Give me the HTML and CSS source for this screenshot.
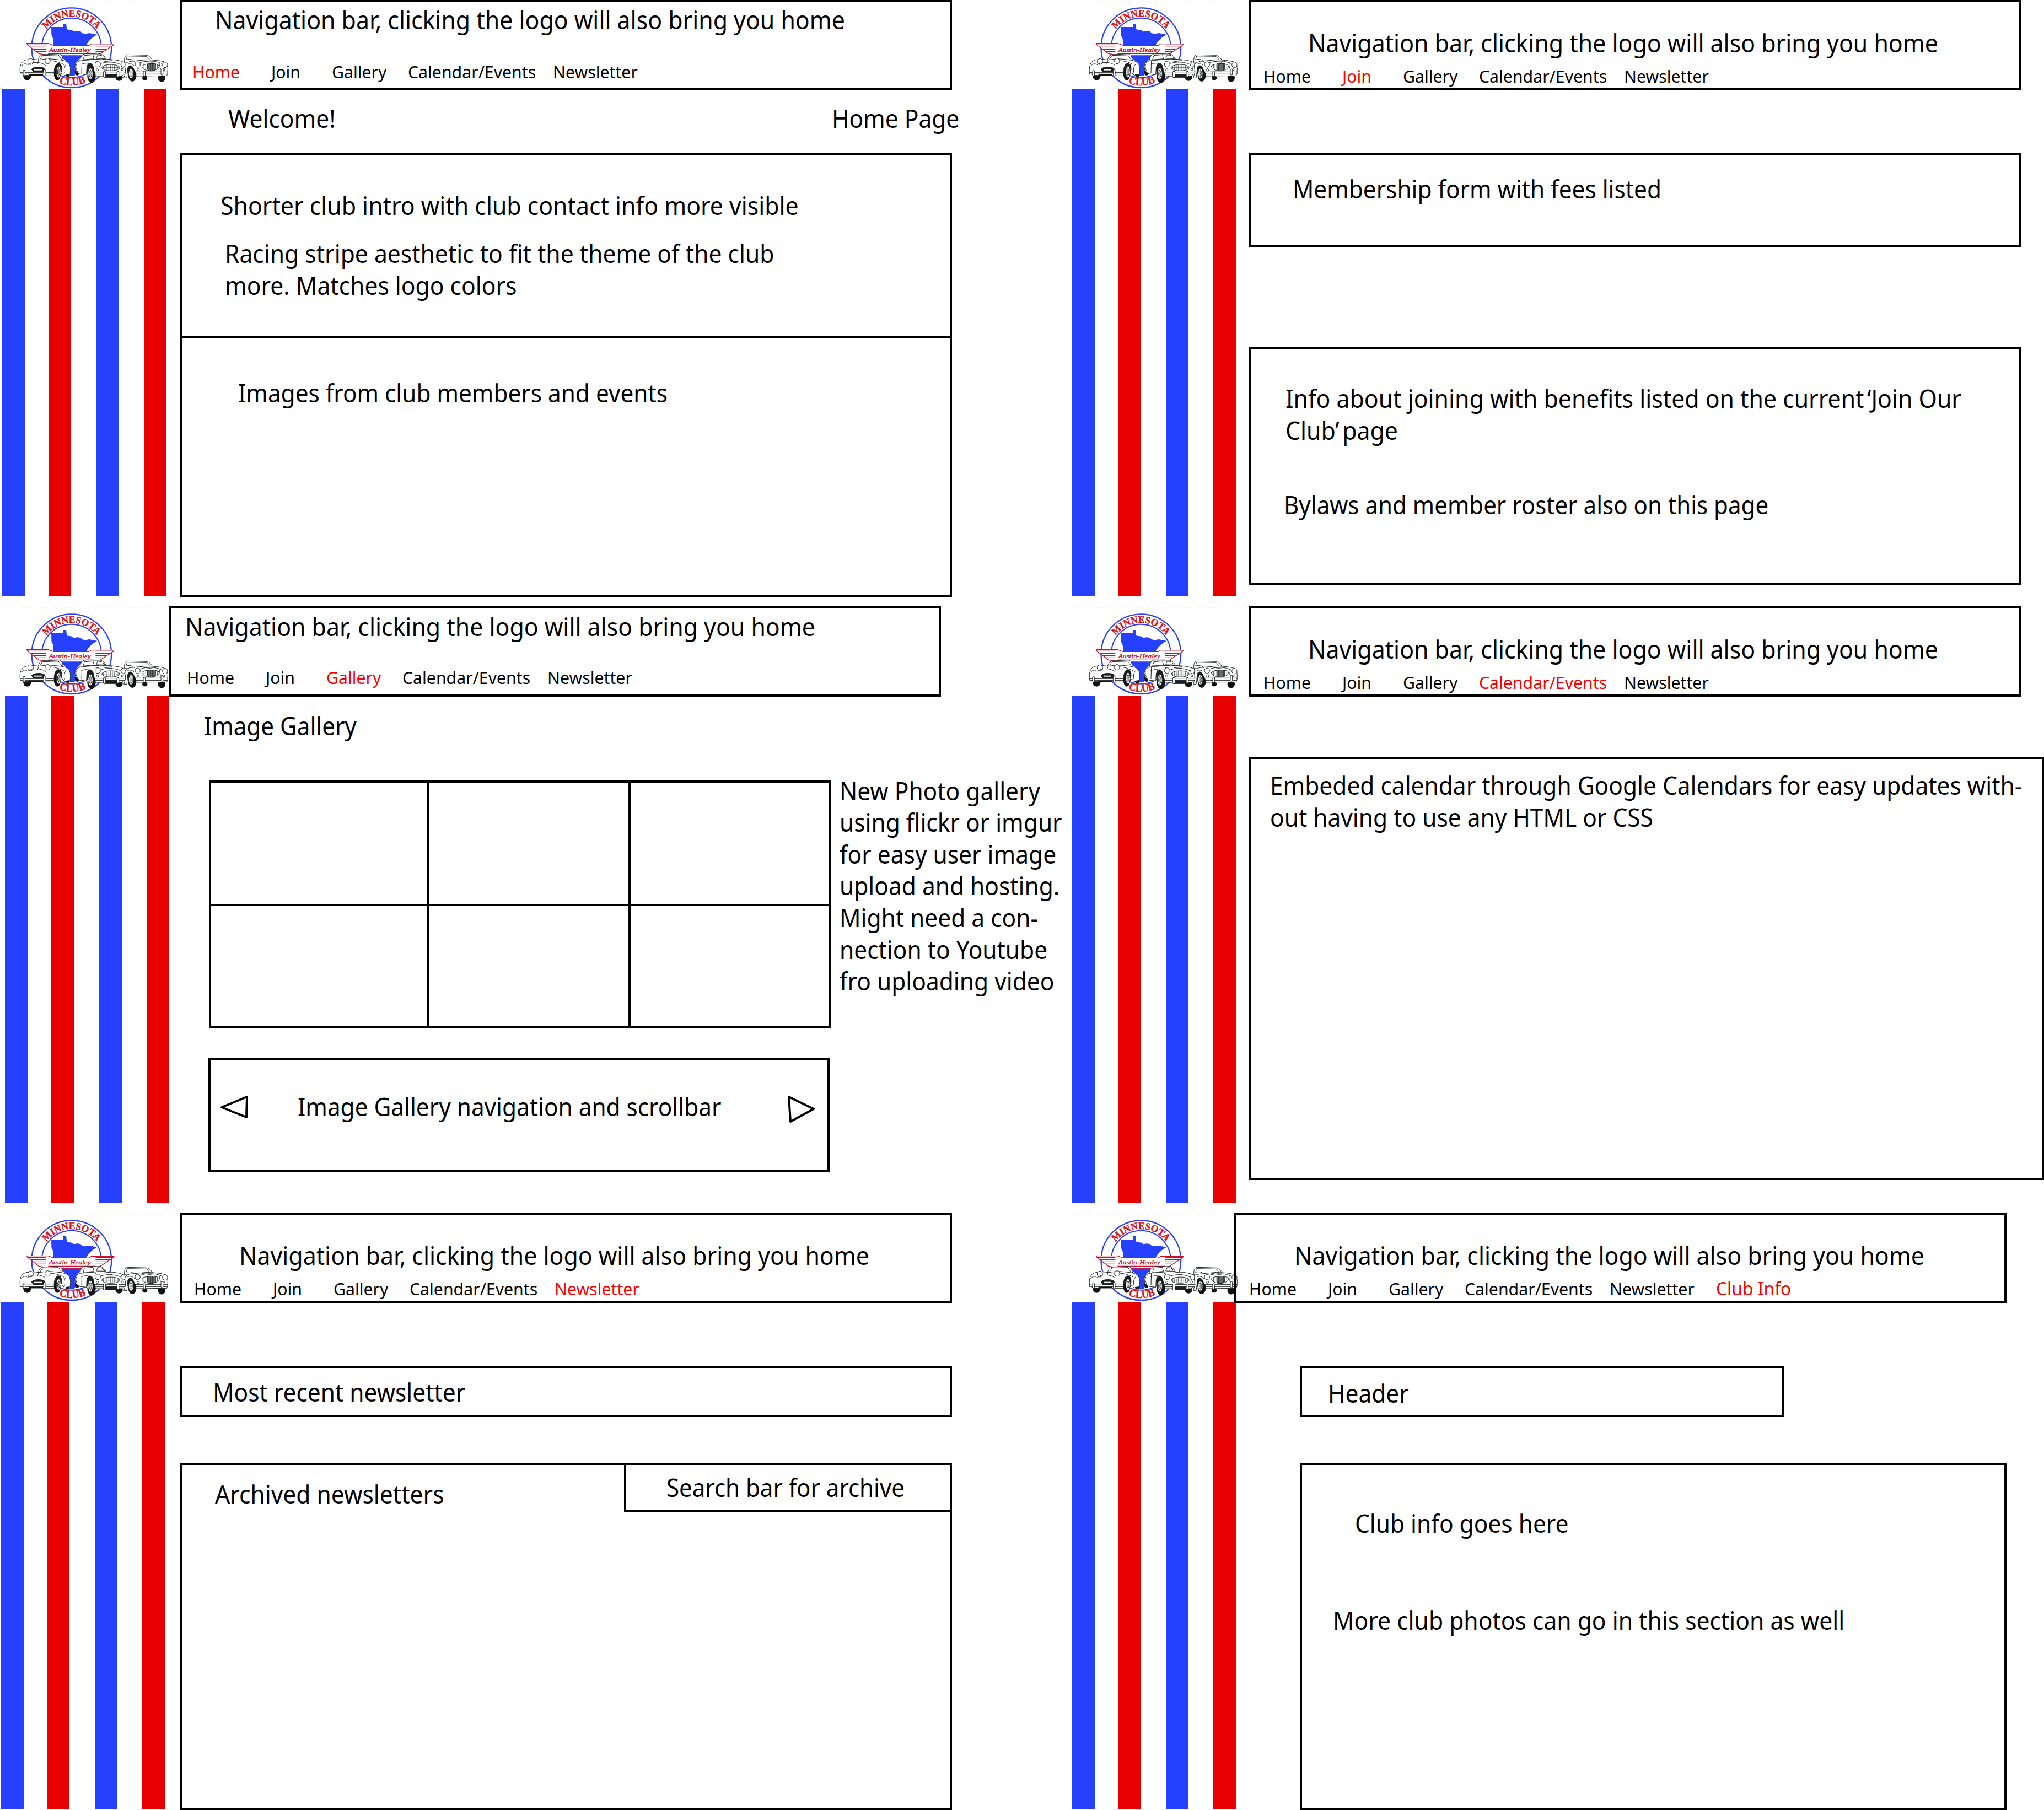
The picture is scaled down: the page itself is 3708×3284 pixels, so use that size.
FILE: index.html
```
<!DOCTYPE html>
<html lang="en">
<head>
<meta charset="utf-8">
<title>Minnesota Austin-Healey Club wireframes</title>
<link rel="stylesheet" href="styles.css">
</head>
<body>
<svg class="defs" aria-hidden="true">
  <symbol id="club-logo" viewBox="0 0 978 486">
    <path d="M108 9H830" fill="none" stroke="#eeeeee" stroke-width="3" stroke-dasharray="14 9 4 12 22 7"/>
    <circle cx="389.500" cy="260" r="217" fill="#fff" stroke="#2540ff" stroke-width="7"/>
    <circle cx="389.500" cy="260" r="162" fill="#fff" stroke="#2540ff" stroke-width="6"/>
    <path fill="#2540ff" d="M279 147H345V129H360L364 160L392 164L402 172L420 169L438 171L448 181L466 184L486 180L528 188L500 207L482 226L468 247V300L434 320L412 345L407 375L414 400L404 414H380L384 370L376 345L345 320L330 300H291V215L280 190Z"/>
    <path id="arc-top" fill="none" d="M219.500 260A170 170 0 0 1 559.500 260"/>
    <path id="arc-bottom" fill="none" d="M184.500 260A205 205 0 0 0 594.500 260"/>
    <text class="logo-serif" font-size="54"><textPath href="#arc-top" startOffset="107" textLength="318" lengthAdjust="spacingAndGlyphs">MINNESOTA</textPath></text>
    <text class="logo-serif" font-size="60"><textPath href="#arc-bottom" startOffset="252" textLength="150" lengthAdjust="spacingAndGlyphs">CLUB</textPath></text>
    <path fill="#fff" stroke="#c8102e" stroke-width="4" d="M146 236H262L292 247H484L496 239H620L616 246L546 292L510 303H275L212 292L150 245Z"/>
    <path fill="none" stroke="#c8102e" stroke-width="4" d="M150 244H250M166 256H250M182 268H250M194 280H250M520 244H616M520 256H598M520 268H578M520 280H560M262 292H520"/>
    <text class="logo-script" x="266" y="282" font-size="31" textLength="228" lengthAdjust="spacingAndGlyphs">Austin-Healey</text>

    <g fill="#fff" stroke="#222826" stroke-width="3" stroke-linejoin="round">
      <ellipse cx="148" cy="412" rx="22" ry="25" fill="#111" stroke="none"/>
      <path d="M208 326C212 308 220 299 238 297L322 293C336 297 340 312 344 328Z"/>
      <path d="M218 322L232 302L318 299L336 325" fill="none"/>
      <path d="M110 398C106 372 110 344 128 332C150 320 184 322 210 326L262 320C300 322 340 326 360 334C378 342 384 362 383 384L380 412L352 410L340 396L322 412H246L226 410H132Z"/>
      <ellipse cx="166" cy="335" rx="15" ry="16"/><ellipse cx="259" cy="332" rx="14" ry="15"/>
      <path d="M150 354C175 334 225 336 248 356M210 328L204 348M274 330C306 332 330 342 348 352M116 360C126 346 140 344 148 352M360 350C350 362 346 380 352 398" fill="none"/>
      <path d="M172 378C176 362 232 360 244 374L240 392H182Z" fill="#1b1f1e"/>
      <path d="M186 380H228" stroke="#fff" stroke-width="6"/>
      <path d="M110 394H300V403H110Z"/><path d="M158 404H234V412H158Z" fill="#111" stroke="none"/>
      <rect x="126" y="382" width="10" height="30" rx="4"/><rect x="238" y="380" width="11" height="34" rx="4"/>
      <path d="M296 412C290 372 302 344 319 344C335 346 338 366 334 390" fill="#1b1f1e"/>
      <ellipse cx="312" cy="406" rx="18" ry="31" fill="#111" stroke="none"/>
      <ellipse cx="319" cy="392" rx="12" ry="31"/><ellipse cx="319" cy="392" rx="6" ry="18"/>
      <path d="M319 364V420M309 380L329 404M309 404L329 380" stroke-width="1.500"/>
      <path d="M356 406L378 402V417H362Z" fill="#1b1f1e" stroke="none"/>
    </g>

    <g fill="#fff" stroke="#222826" stroke-width="3" stroke-linejoin="round">
      <ellipse cx="420" cy="390" rx="12" ry="21" fill="#111" stroke="none"/>
      <ellipse cx="648" cy="420" rx="20" ry="20" fill="#111" stroke="none"/>
      <path d="M434 334C438 308 446 295 464 293L548 294C562 298 572 310 578 324L560 345H440Z"/>
      <path d="M452 325L460 302L506 298L512 320ZM524 318L532 299L554 302L572 319Z"/>
      <path d="M408 366C406 346 420 334 442 330L512 324C560 318 640 324 668 336C684 352 684 372 680 398L664 414H520L502 372C494 352 480 352 472 370L470 406L432 402L412 386Z"/>
      <path d="M442 350C470 340 486 342 502 360M516 330L548 346C580 334 630 336 658 352M470 325L540 322M446 330L444 396M558 322L612 328M568 334L612 338M416 350C410 364 414 378 422 390" fill="none"/>
      <ellipse cx="532" cy="350" rx="15" ry="15"/><ellipse cx="670" cy="352" rx="11" ry="15"/>
      <circle cx="530" cy="380" r="6"/><circle cx="666" cy="378" r="6"/>
      <ellipse cx="603" cy="368" rx="49" ry="17"/>
      <path d="M562 360V376M572 357V380M582 354V382M592 352V384M602 352V384M612 352V384M622 354V382M632 357V380M642 360V376M556 368H650" fill="none" stroke-width="2"/>
      <path d="M514 392H690V404H514Z"/><path d="M574 404H638V421H574Z" fill="#1b1f1e"/>
      <rect x="562" y="388" width="13" height="34" rx="5"/><rect x="636" y="388" width="11" height="30" rx="5"/>
      <path d="M476 400C468 370 474 344 490 345C504 346 512 364 512 396Z" fill="#1b1f1e"/>
      <ellipse cx="498" cy="414" rx="23" ry="37" fill="#111" stroke="none"/>
      <ellipse cx="492" cy="401" rx="13" ry="31"/><ellipse cx="492" cy="401" rx="7" ry="19"/>
      <path d="M492 372V430M482 388L502 414M482 414L502 388" stroke-width="1.500"/>
    </g>

    <g fill="#fff" stroke="#222826" stroke-width="3" stroke-linejoin="round">
      <ellipse cx="788" cy="424" rx="14" ry="12" fill="#111" stroke="none"/>
      <ellipse cx="880" cy="424" rx="20" ry="22" fill="#111" stroke="none"/>
      <path d="M677 338C676 314 680 300 694 298L800 301C816 306 826 318 830 330L780 346Z"/>
      <path d="M686 326L692 305L798 307L816 326" fill="none"/>
      <path d="M680 366C678 346 690 338 712 334L800 325C846 328 894 330 906 344C916 362 914 392 908 412L740 414L724 372C714 356 702 358 696 374L690 424L674 424L684 392Z"/>
      <path d="M690 324C716 318 730 330 736 342M760 342C800 328 850 330 880 346M770 330L830 340M694 350C708 344 724 348 734 362M872 340C864 356 872 374 884 388" fill="none"/>
      <ellipse cx="749" cy="351" rx="14" ry="15"/><ellipse cx="898" cy="353" rx="14" ry="15"/>
      <circle cx="752" cy="380" r="6"/><circle cx="892" cy="378" r="5"/>
      <path d="M772 360C784 344 856 342 866 358C866 376 844 384 820 386C796 384 776 378 772 360Z"/>
      <path d="M802 348L846 346V376L832 386H810L802 374Z" fill="#6b706e"/>
      <path d="M784 352V372M793 349V378M802 348V380M811 347V386M820 347V386M829 347V386M838 347V382M847 347V378M856 350V372" fill="none" stroke-width="2.500"/>
      <path d="M736 391H912V403H736Z"/>
      <rect x="780" y="387" width="11" height="28" rx="4"/><rect x="876" y="376" width="11" height="32" rx="4"/>
      <path d="M698 404C690 374 696 356 710 357C724 360 732 376 732 404Z" fill="#1b1f1e"/>
      <ellipse cx="720" cy="411" rx="22" ry="33" fill="#111" stroke="none"/>
      <ellipse cx="713" cy="400" rx="13" ry="27"/><ellipse cx="713" cy="400" rx="7" ry="16"/>
      <path d="M713 374V426M703 388L723 412M703 412L723 388" stroke-width="1.500"/>
    </g>
  </symbol>
</svg>

<main class="board">
  <section class="frame home">
    <aside class="side">
      <svg class="logo"><use href="#club-logo"/></svg>
      <div class="stripes"><i></i><i></i><i></i><i></i></div>
    </aside>
    <div class="main">
      <header class="nav high">
        <p class="t nav-note">Navigation bar, clicking the logo will also bring you home</p>
        <nav class="links"><a class="on">Home</a><a>Join</a><a>Gallery</a><a>Calendar/Events</a><a>Newsletter</a></nav>
      </header>
      <div class="titles"><h2 class="t">Welcome!</h2><h2 class="t">Home Page</h2></div>
      <div class="box intro">
        <p class="t intro-a">Shorter club intro with club contact info more visible</p>
        <p class="t intro-b">Racing stripe aesthetic to fit the theme of the club<br>more. Matches logo colors</p>
      </div>
      <div class="box photos"><p class="t">Images from club members and events</p></div>
    </div>
  </section>

  <section class="frame join">
    <aside class="side">
      <svg class="logo"><use href="#club-logo"/></svg>
      <div class="stripes"><i></i><i></i><i></i><i></i></div>
    </aside>
    <div class="main">
      <header class="nav">
        <p class="t nav-note">Navigation bar, clicking the logo will also bring you home</p>
        <nav class="links"><a>Home</a><a class="on">Join</a><a>Gallery</a><a>Calendar/Events</a><a>Newsletter</a></nav>
      </header>
      <div class="box form"><p class="t">Membership form with fees listed</p></div>
      <div class="box benefits">
        <p class="t benefits-a">Info about joining with benefits listed on the current <span class="tuck">‘Join Our</span><br>Club’ <span class="tuck">page</span></p>
        <p class="t benefits-b">Bylaws and member roster also on this page</p>
      </div>
    </div>
  </section>

  <section class="frame gallery">
    <aside class="side">
      <svg class="logo"><use href="#club-logo"/></svg>
      <div class="stripes"><i></i><i></i><i></i><i></i></div>
    </aside>
    <div class="main">
      <header class="nav high">
        <p class="t nav-note">Navigation bar, clicking the logo will also bring you home</p>
        <nav class="links"><a>Home</a><a>Join</a><a class="on">Gallery</a><a>Calendar/Events</a><a>Newsletter</a></nav>
      </header>
      <h2 class="t gallery-title">Image Gallery</h2>
      <div class="gallery-row">
        <div class="thumbs"><div></div><div></div><div></div><div></div><div></div><div></div></div>
        <p class="t gallery-note">New Photo gallery<br>using flickr or imgur<br>for easy user image<br>upload and hosting.<br>Might need a con-<br>nection to Youtube<br>fro uploading video</p>
      </div>
      <div class="box scroller">
        <svg class="arrow" width="54" height="50" viewBox="0 0 54 50"><path d="M3 22L49 3L48 40Z"/></svg>
        <p class="t">Image Gallery navigation and scrollbar</p>
        <svg class="arrow" width="54" height="54" viewBox="0 0 54 54"><path d="M4 3L49 25L7 48Z"/></svg>
      </div>
    </div>
  </section>

  <section class="frame calendar">
    <aside class="side">
      <svg class="logo"><use href="#club-logo"/></svg>
      <div class="stripes"><i></i><i></i><i></i><i></i></div>
    </aside>
    <div class="main">
      <header class="nav">
        <p class="t nav-note">Navigation bar, clicking the logo will also bring you home</p>
        <nav class="links"><a>Home</a><a>Join</a><a>Gallery</a><a class="on">Calendar/Events</a><a>Newsletter</a></nav>
      </header>
      <div class="box embed"><p class="t">Embeded calendar through Google Calendars for easy updates with-<br>out having to use any HTML or CSS</p></div>
    </div>
  </section>

  <section class="frame newsletter">
    <aside class="side">
      <svg class="logo"><use href="#club-logo"/></svg>
      <div class="stripes"><i></i><i></i><i></i><i></i></div>
    </aside>
    <div class="main">
      <header class="nav">
        <p class="t nav-note">Navigation bar, clicking the logo will also bring you home</p>
        <nav class="links"><a>Home</a><a>Join</a><a>Gallery</a><a>Calendar/Events</a><a class="on">Newsletter</a></nav>
      </header>
      <div class="box recent"><p class="t">Most recent newsletter</p></div>
      <div class="box archive">
        <p class="t archive-title">Archived newsletters</p>
        <div class="box search"><p class="t">Search bar for archive</p></div>
      </div>
    </div>
  </section>

  <section class="frame info">
    <aside class="side">
      <svg class="logo"><use href="#club-logo"/></svg>
      <div class="stripes"><i></i><i></i><i></i><i></i></div>
    </aside>
    <div class="main">
      <header class="nav">
        <p class="t nav-note">Navigation bar, clicking the logo will also bring you home</p>
        <nav class="links"><a>Home</a><a>Join</a><a>Gallery</a><a>Calendar/Events</a><a>Newsletter</a><a class="on extra">Club Info</a></nav>
      </header>
      <div class="box heading"><p class="t">Header</p></div>
      <div class="box about">
        <p class="t about-a">Club info goes here</p>
        <p class="t about-b">More club photos can go in this section as well</p>
      </div>
    </div>
  </section>
</main>
</body>
</html>
```
FILE: styles.css
```
* { box-sizing: border-box; }

body {
  margin: 0;
  background: #fff;
  color: #000;
  font-family: "Noto Sans", sans-serif;
}

.defs { display: block; width: 0; height: 0; }

.board {
  display: grid;
  grid-template-columns: 1940px 1768px;
  grid-template-rows: 1100px 1100px 1084px;
  width: 3708px;
  height: 3284px;
  overflow: hidden;
}

.frame { display: flex; min-width: 0; }

/* Sidebar: logo over four racing stripes */
.side { flex: none; width: 326px; }
.logo { display: block; width: 326px; height: 162px; }
.stripes {
  display: grid;
  grid-template-columns: 84px 87px 86px 41px;
  height: 920px;
  margin-left: 4px;
}
.stripes i { width: 41px; background: #2540ff; }
.stripes i:first-child { width: 42px; }
.stripes i:nth-child(even) { background: #e80000; }
.gallery .stripes { margin-left: 9px; }
.newsletter .stripes { margin-left: 1px; }

.main { flex: 1; min-width: 0; display: flex; flex-direction: column; align-items: flex-start; }
.gallery .main { margin-left: -20px; }
.info .main { margin-left: -27px; }

/* Annotation text, slightly condensed */
.t {
  --condense: .943;
  margin: 0;
  font-size: 45px;
  font-weight: 400;
  line-height: 57.600px;
  white-space: nowrap;
  transform: scaleX(var(--condense));
  transform-origin: 0 0;
}

.box { border: 4px solid #000; width: 1401px; }

/* Navigation bar */
.nav {
  flex: none;
  width: 1401px;
  height: 164px;
  border: 4px solid #000;
}
.nav-note { --condense: .951; margin: 45px 0 0 103px; }
.links {
  display: grid;
  grid-template-columns: 143px 110px 138px 263px 193px 150px;
  margin: 11px 0 0 22px;
  font-size: 31.400px;
  line-height: 40px;
  white-space: nowrap;
}
.links a { transform: scaleX(.963); transform-origin: 0 0; }
.links .on { color: #f00; }
.links .extra { font-size: 33px; line-height: 39px; }

.home .nav-note { margin: 3px 0 0 60px; }
.home .links { margin: 45px 0 0 19px; }
.gallery .nav-note { margin: 4px 0 0 26px; }
.gallery .links { margin: 43px 0 0 29px; }
.newsletter .nav-note { margin-left: 104px; }
.info .nav-note { margin-left: 105px; }
.newsletter .links { margin-left: 22px; }
.info .links { margin-left: 23px; }

/* Home */
.titles { display: grid; grid-template-columns: 1095px auto; margin: 22px 0 0 88px; }
.intro { height: 336px; margin-top: 34px; }
.intro-a { --condense: .95; margin: 62px 0 0 70px; }
.intro-b { --condense: .946; margin: 30px 0 0 78px; }
.photos { height: 474px; margin-top: -4px; }
.photos .t { --condense: .94; margin: 70px 0 0 102px; }

/* Join */
.form { height: 170px; margin-top: 114px; }
.form .t { --condense: .94; margin: 32px 0 0 75px; }
.benefits { height: 432px; margin-top: 182px; }
.benefits-a { --condense: .95; margin: 60px 0 0 62px; }
.benefits-b { --condense: .935; margin: 78px 0 0 59px; }
.tuck { margin-left: -6px; }

/* Gallery */
.gallery-title { --condense: .937; margin: 24px 0 0 64px; }
.gallery-row { display: flex; margin: 70px 0 0 73px; }
.thumbs {
  flex: none;
  display: grid;
  grid-template-columns: 392px 361px 360px;
  grid-template-rows: 220px 218px;
  gap: 4px;
  width: 1129px;
  height: 450px;
  padding: 4px;
  background: #000;
}
.thumbs div { background: #fff; }
.gallery-note { margin: -10px 0 0 15px; }
.scroller {
  display: flex;
  align-items: flex-start;
  width: 1127px;
  height: 208px;
  margin: 53px 0 0 72px;
  padding: 64px 20px 0 17px;
}
.scroller .t { --condense: .94; width: 938px; margin: -8px 0 0 87px; }
.arrow { flex: none; fill: none; stroke: #000; stroke-width: 4; stroke-linejoin: round; }

/* Calendar */
.embed { width: 1442px; height: 768px; margin-top: 109px; }
.embed .t { margin: 19px 0 0 34px; }

/* Newsletter */
.recent { height: 93px; margin-top: 114px; }
.recent .t { margin: 15px 0 0 56px; }
.archive { display: flex; justify-content: space-between; align-items: flex-start; height: 630px; margin-top: 83px; }
.archive-title { --condense: .946; margin: 24px 0 0 60px; }
.search { width: 595px; height: 90px; margin: -4px -4px 0 0; }
.search .t { --condense: .934; margin: 12px 0 0 73px; }

/* Club info */
.heading { width: 879px; height: 93px; margin: 114px 0 0 119px; }
.heading .t { margin: 17px 0 0 47px; }
.about { width: 1282px; height: 630px; margin: 83px 0 0 119px; }
.about-a { margin: 77px 0 0 96px; }
.about-b { --condense: .946; margin: 118px 0 0 56px; }

/* Logo lettering */
.logo-serif { font-family: "Liberation Serif", serif; font-weight: 700; fill: #dc1420; stroke: #dc1420; stroke-width: 1.500; }
.logo-script { font-family: "Liberation Serif", serif; font-style: italic; fill: #c8102e; stroke: #c8102e; stroke-width: 1; }
```
